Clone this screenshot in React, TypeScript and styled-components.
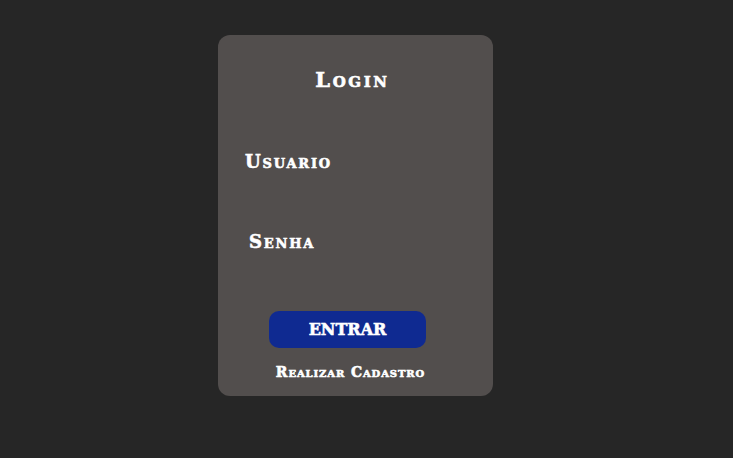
import styled, { createGlobalStyle, css } from "styled-components";

const GlobalStyle = createGlobalStyle`
  html, body {
    margin: 0;
    padding: 0;
    background: #262626;
    height: 100%;
  }
`;

// heavy slab look shared by every text
const slab = css`
  font-family: "DejaVu Serif", serif;
  font-weight: 700;
  color: #fff;
  -webkit-text-stroke: 0.6px #fff;
`;

// full page, card sits a bit left of center
const Page = styled.div`
  display: flex;
  justify-content: center;
  padding: 35px 22px 0 0;
`;

const Card = styled.form`
  box-sizing: border-box;
  width: 275px;
  height: 361px;
  background: #524e4d;
  border-radius: 12px;
  display: flex;
  flex-direction: column;
  align-items: center;
  padding-top: 31px;
`;

const Title = styled.h1`
  ${slab}
  margin: 0 6px 0 0;
  font-size: 21px;
  font-variant: small-caps;
  letter-spacing: 2.6px;
  line-height: 28px;
`;

// label for a field (inputs are invisible in the design)
const Field = styled.label<{ $indent: number }>`
  ${slab}
  align-self: flex-start;
  margin: 56px 0 0 ${(p) => p.$indent}px;
  font-size: 18px;
  font-variant: small-caps;
  letter-spacing: 1.8px;
  line-height: 24px;
`;

const Button = styled.button`
  ${slab}
  width: 157px;
  height: 37px;
  margin: 57px 16px 0 0;
  padding: 0;
  border: none;
  border-radius: 10px;
  background: #0f2a91;
  font-size: 16px;
  letter-spacing: 0;
  cursor: pointer;
`;

const Link = styled.a`
  ${slab}
  margin: 14px 10px 0 0;
  font-size: 14px;
  font-variant: small-caps;
  letter-spacing: 0.9px;
  text-decoration: none;
  line-height: 20px;
`;

export default function App() {
  return (
    <>
      <GlobalStyle />
      <Page>
        <Card>
          <Title>Login</Title>
          <Field $indent={27}>Usuario</Field>
          <Field $indent={31}>Senha</Field>
          <Button type="button">ENTRAR</Button>
          <Link href="#">Realizar Cadastro</Link>
        </Card>
      </Page>
    </>
  );
}
